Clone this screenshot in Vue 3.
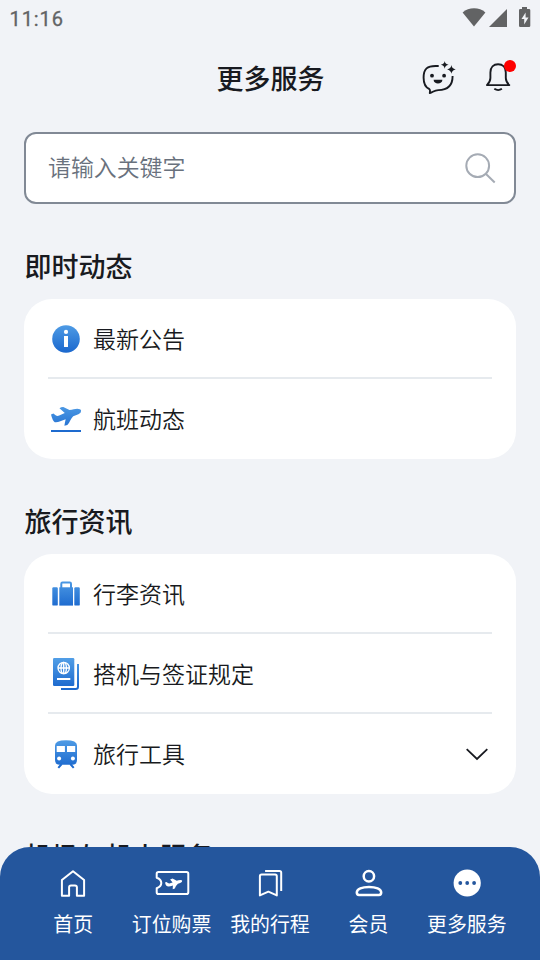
<script setup>
const sections = [
  {
    title: '即时动态',
    items: [
      { label: '最新公告', icon: 'info' },
      { label: '航班动态', icon: 'flight' },
    ],
  },
  {
    title: '旅行资讯',
    items: [
      { label: '行李资讯', icon: 'luggage' },
      { label: '搭机与签证规定', icon: 'passport' },
      { label: '旅行工具', icon: 'train', expandable: true },
    ],
  },
  { title: '机场与机上服务', items: [] },
]

const tabs = [
  { label: '首页', icon: 'home' },
  { label: '订位购票', icon: 'ticket' },
  { label: '我的行程', icon: 'trips' },
  { label: '会员', icon: 'member' },
  { label: '更多服务', icon: 'more' },
]
</script>

<template>
  <div class="screen">
    <div class="status">
      <span class="time">11:16</span>
      <svg class="status-icons" width="70" height="24" viewBox="0 0 70 24">
        <path d="M2.6 7.4C8.8 2 19.4 2 25.4 7.4L14 21.6z" />
        <path d="M47 4v18H29z" />
        <path fill-rule="evenodd" d="M62 2h5v2h2q1.300 0 1.300 1.300v15.400q0 1.300-1.300 1.300h-8.700q-1.300 0-1.300-1.300V5.300Q59 4 60.300 4H62zM65.600 7.500L61.500 14h2.700v5.500l4.300-7h-2.900z" />
      </svg>
    </div>

    <header class="header">
      <h1>更多服务</h1>
      <div class="actions">
        <svg class="line" width="36" height="36" viewBox="0 0 36 36">
          <path d="M18.700 6H15.500C7.500 6 3.600 8.500 3.600 17.800c0 5.700 1.500 9.500 5.700 11.200.8.400 1 1.200.5 4.100 3-.8 4.500-3 8.500-3 9 0 14.300-3.600 14.300-14.100" />
          <circle class="ink" cx="12" cy="15.700" r="1.900" />
          <circle class="ink" cx="24.100" cy="15.700" r="1.900" />
          <path class="ink" d="M13.600 19.700h8.800c0 5.100-8.800 5.100-8.800 0z" />
          <path class="ink" d="M24.700 1q.4 3.200 3.900 3.800-3.500.6-3.900 3.900-.4-3.300-3.900-3.900 3.500-.6 3.900-3.800zM31.400 5.100q.5 3.700 4.300 4.300-3.800.6-4.300 4.300-.5-3.700-4.300-4.300 3.800-.6 4.300-4.300z" />
        </svg>
        <div class="bell">
          <svg class="line" width="36" height="36" viewBox="0 0 36 36">
            <path d="M6.900 25.100q3.500-3.200 3.500-7v-5.600c0-5.200 3.200-8.300 7.700-8.300s7.700 3.100 7.700 8.300v5.600q0 3.800 3.500 7z" />
            <path d="M14.300 28.800q3.900 2.600 7.600 0" />
          </svg>
          <i class="dot"></i>
        </div>
      </div>
    </header>

    <div class="search">
      <span>请输入关键字</span>
      <svg width="36" height="36" viewBox="0 0 36 36">
        <circle cx="15.700" cy="15.700" r="11.400" />
        <path d="M24 24l8.700 8.500" />
      </svg>
    </div>

    <main>
      <svg class="defs" width="0" height="0">
        <linearGradient id="blue" gradientUnits="userSpaceOnUse" x1="0" y1="3" x2="0" y2="31">
          <stop offset="0" stop-color="#509de6" />
          <stop offset="1" stop-color="#1c69ce" />
        </linearGradient>
      </svg>
      <section v-for="s in sections" :key="s.title">
        <h2>{{ s.title }}</h2>
        <div v-if="s.items.length" class="card">
          <div v-for="item in s.items" :key="item.label" class="row">
            <svg class="glyph" width="36" height="36" viewBox="0 0 36 36">
              <g v-if="item.icon === 'info'">
                <circle cx="18" cy="18" r="13.800" />
                <circle class="cut" cx="18" cy="10.900" r="2.100" />
                <path class="cut" d="M16 15h4v11h-4z" />
              </g>
              <g v-else-if="item.icon === 'flight'">
                <path d="M3 13.400l2.400-.9 2.200 1.700q1.600 1.200 3.600.3l5.600-2.400-5.300-4.900q1.700-1.200 3.800-1.100l6.200 2.900q2.200-.4 4.200-.8 6.800-1.100 7.400 1.500.2 2.100-2.700 3.600l-5.200 1.900c-2.500 2.200-3.300 6.500-5.900 8.700l-2.900.8q.6-3.800 1.300-6.400c-4.400 1.700-8 3.400-10.900 2.900Q4.600 19.900 3 13.400z" />
                <path d="M3 29h30v2H3z" />
              </g>
              <g v-else-if="item.icon === 'luggage'">
                <rect x="4.300" y="11.300" width="5.500" height="18.300" rx="1.200" />
                <rect x="11.300" y="11.300" width="13.700" height="18.300" />
                <rect x="26.300" y="11.300" width="5.500" height="18.300" rx="1.200" />
                <path class="stroke" d="M13.300 12V7.700q0-1.200 1.200-1.200h7.300q1.200 0 1.200 1.200V12" />
              </g>
              <g v-else-if="item.icon === 'passport'">
                <rect x="5" y="2" width="21.300" height="28" rx="1.200" />
                <g class="carve">
                  <circle cx="15.700" cy="12" r="5.700" />
                  <ellipse cx="15.700" cy="12" rx="2.700" ry="5.700" />
                  <path d="M10 12h11.400M15.700 6.300v11.400" />
                </g>
                <path class="cut" d="M9 22h13.300v2H9z" />
                <path class="stroke" d="M13 33h14.700q2.300 0 2.300-2.300V8" />
              </g>
              <g v-else>
                <path d="M7 9.500Q7 4.300 18 4.300t11 5.200V24q0 4.800-4.500 4.800h-13Q7 28.800 7 24z" />
                <path class="cut" d="M8.700 10h8.200v6H8.700zM19 10h8.200v6H19z" />
                <circle class="cut" cx="11.100" cy="22.400" r="2" />
                <circle class="cut" cx="24.900" cy="22.400" r="2" />
                <path class="stroke" d="M13.700 28l-3.400 3.900M22.300 28l3.400 3.900" />
              </g>
            </svg>
            <span>{{ item.label }}</span>
            <svg v-if="item.expandable" class="chevron" width="24" height="24" viewBox="0 0 24 24">
              <path d="M1.700 7.200L12 17 22.300 7.200" />
            </svg>
          </div>
        </div>
      </section>
    </main>

    <nav class="tabbar">
      <div v-for="t in tabs" :key="t.label" class="tab">
        <svg width="36" height="36" viewBox="0 0 36 36">
          <path v-if="t.icon === 'home'" d="M6.900 30.700V15L18 6.200 29.100 15v15.700h-7.200v-8.400q0-1.900-1.900-1.900h-4q-1.900 0-1.900 1.900v8.400z" />
          <g v-else-if="t.icon === 'ticket'">
            <path d="M2.700 12.700V8.800Q2.700 7 4.500 7h28q1.800 0 1.800 1.800v18.400q0 1.800-1.800 1.800h-28q-1.800 0-1.800-1.800v-3.900q4.600-1.700 4.600-5.300t-4.600-5.300z" />
            <path class="solid" d="M11 17.400l1.500-.4 1.400 1q1 .7 2.200.3l2.500-.9-2.500-3 2.400-.8 4.300 2.200 1.500-.5q3.600-1 3.900.5.200 1.500-2 2.200l-2.300.7q-1.900 1.600-3.100 4.900l-2.100.7.200-3.800c-3 1-5.400 1.500-6.500.2Q11.500 19.500 11 17.400z" />
          </g>
          <g v-else-if="t.icon === 'trips'">
            <path d="M7.900 30.400V11.200q0-1.700 1.700-1.700h13.500q1.700 0 1.700 1.700v19.200l-8.400-3.700z" />
            <path d="M13.100 5.900h14.400q1.700 0 1.700 1.700v18.500" />
          </g>
          <g v-else-if="t.icon === 'member'" class="bold">
            <circle cx="18.900" cy="11.200" r="5.200" />
            <path d="M6.800 27.500c0-3.500 5.400-5.600 12.200-5.600s12.200 2.100 12.200 5.600q0 2.400-2.200 2.400H9q-2.200 0-2.200-2.400z" />
          </g>
          <g v-else>
            <circle class="solid" cx="18.200" cy="18" r="13.600" />
            <circle class="hole" cx="11.300" cy="18" r="1.900" />
            <circle class="hole" cx="18.200" cy="18" r="1.900" />
            <circle class="hole" cx="25.100" cy="18" r="1.900" />
          </g>
        </svg>
        <span>{{ t.label }}</span>
      </div>
    </nav>
  </div>
</template>

<style>
body {
  margin: 0;
  background: #f1f3f7;
}
</style>

<style scoped>
.screen {
  position: relative;
  box-sizing: border-box;
  width: 540px;
  height: 960px;
  overflow: hidden;
  background: #f1f3f7;
  color: #181a20;
  font-family: "Noto Sans CJK SC", sans-serif;
}
svg {
  display: block;
  flex: none;
}
h1,
h2 {
  margin: 0;
  font-size: 27px;
  font-weight: 500;
}
.status {
  display: flex;
  align-items: center;
  justify-content: space-between;
  height: 38px;
  padding: 0 10px 0 9.5px;
}
.time {
  font: 400 20px/38px Roboto, sans-serif;
  letter-spacing: 0.9px;
  color: #626364;
  -webkit-text-stroke: 0.3px #626364;
}
.status-icons {
  margin-bottom: 4px;
  fill: #626364;
  overflow: visible;
}
.header {
  display: grid;
  grid-template-columns: 1fr auto 1fr;
  align-items: center;
  height: 80px;
  padding: 0 24px;
}
.header h1 {
  grid-column: 2;
  padding: 0 0 2px 1px;
}
.actions {
  display: flex;
  justify-content: flex-end;
  gap: 24px;
}
.line {
  fill: none;
  stroke: #181a20;
  stroke-width: 1.9;
  stroke-linejoin: round;
}
.ink {
  fill: #181a20;
  stroke: none;
}
.bell {
  position: relative;
}
.dot {
  position: absolute;
  top: 0;
  right: 0;
  width: 12px;
  height: 12px;
  border-radius: 50%;
  background: #fe0000;
}
.search {
  display: flex;
  align-items: center;
  justify-content: space-between;
  box-sizing: border-box;
  height: 72px;
  margin: 14px 24px 0;
  padding: 0 16px 0 22px;
  border: 2px solid #818995;
  border-radius: 12px;
  background: #fff;
}
.search span {
  padding-bottom: 4px;
  font-size: 22.9px;
  font-weight: 350;
  color: #69717d;
}
.search svg {
  fill: none;
  stroke: #a5abb4;
  stroke-width: 2;
}
main {
  padding: 32px 24px 0;
}
.defs {
  position: absolute;
}
section h2 {
  height: 63px;
  padding-left: 0.5px;
  line-height: 60px;
}
section + section {
  margin-top: 32px;
}
.card {
  border-radius: 28px;
  background: #fff;
  padding: 0 24px;
}
.row {
  display: flex;
  align-items: center;
  box-sizing: border-box;
  height: 80px;
  padding-top: 2px;
  border-bottom: 2px solid #e6eaee;
}
.row:last-child {
  border-bottom-color: transparent;
}
.row span {
  flex: 1;
  padding: 0 0 2px 9px;
  font-size: 23px;
  font-weight: 350;
}
.glyph {
  fill: url(#blue);
}
.cut {
  fill: #fff;
}
.stroke {
  fill: none;
  stroke: url(#blue);
  stroke-width: 2;
}
.carve {
  fill: none;
  stroke: #fff;
  stroke-width: 1.3;
}
.chevron {
  margin-right: 3px;
  fill: none;
  stroke: #181a20;
  stroke-width: 1.8;
}
.tabbar {
  position: absolute;
  left: 0;
  right: 0;
  bottom: 0;
  display: grid;
  grid-template-columns: repeat(5, 1fr);
  box-sizing: border-box;
  height: 113px;
  padding: 18px 24px 0;
  border-radius: 30px 30px 0 0;
  background: #24569d;
  color: #fff;
}
.tab {
  display: flex;
  flex-direction: column;
  align-items: center;
}
.tab svg {
  fill: none;
  stroke: #fff;
  stroke-width: 2;
  stroke-linejoin: round;
}
.tab .bold {
  stroke-width: 2.5;
}
.tab span {
  margin-top: 8px;
  font-size: 19.9px;
  line-height: 30px;
  white-space: nowrap;
}
.tab .solid {
  fill: #fff;
  stroke: none;
}
.tab .hole {
  fill: #24569d;
  stroke: none;
}
</style>
